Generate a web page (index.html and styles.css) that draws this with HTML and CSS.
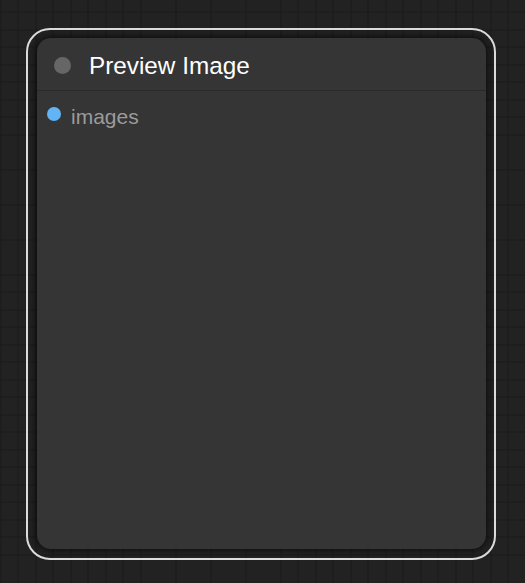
FILE: index.html
```html
<!DOCTYPE html>
<html>
<head>
<meta charset="utf-8">
<link rel="stylesheet" href="styles.css">
</head>
<body>
  <div class="canvas">
    <div class="selection">
      <div class="node">
        <div class="node-header">
          <span class="collapse-dot"></span>
          <span class="node-title">Preview Image</span>
        </div>
        <div class="node-body">
          <div class="slot">
            <span class="slot-dot"></span>
            <span class="slot-label">images</span>
          </div>
        </div>
      </div>
    </div>
  </div>
</body>
</html>
```
FILE: styles.css
```css
html, body {
  margin: 0;
  padding: 0;
  height: 100%;
}
body {
  background-color: #222222;
  background-image:
    repeating-linear-gradient(to bottom, transparent 0, transparent 16.5px, #1a1a1a 16.5px, #1a1a1a 17.5px),
    repeating-linear-gradient(to right, transparent 0, transparent 16.5px, #1a1a1a 16.5px, #1a1a1a 17.5px);
  background-position: 0 -4.5px, 1.5px 0;
  font-family: "Liberation Sans", Arial, sans-serif;
  overflow: hidden;
}
.canvas {
  padding: 28px 0 0 26px;
}
.selection {
  box-sizing: border-box;
  width: 470px;
  height: 532px;
  border: 2px solid #dcdcdc;
  border-radius: 24px;
  padding: 8px 8px 9px 9px;
  display: flex;
}
.node {
  flex: 1;
  background: #353535;
  border-radius: 14px;
  box-shadow: 0 0 6px 2px rgba(0, 0, 0, 0.55);
  display: flex;
  flex-direction: column;
}
.node-header {
  height: 53px;
  box-sizing: border-box;
  border-bottom: 1px solid #2a2a2a;
  display: flex;
  align-items: center;
  padding-left: 17px;
  gap: 18px;
}
.collapse-dot {
  width: 17px;
  height: 17px;
  border-radius: 50%;
  background: #666666;
  flex: none;
  margin-top: 2px;
}
.node-title {
  color: #ffffff;
  font-size: 24.3px;
  line-height: 24px;
  white-space: nowrap;
  margin-top: 3px;
}
.node-body {
  padding: 15px 0 0 10px;
}
.slot {
  display: flex;
  align-items: flex-start;
  gap: 10px;
}
.slot-dot {
  width: 14px;
  height: 14px;
  border-radius: 50%;
  background: #62b4f4;
  flex: none;
  margin-top: 1px;
}
.slot-label {
  color: #9b9b9b;
  font-size: 21px;
  line-height: 21px;
}
```
